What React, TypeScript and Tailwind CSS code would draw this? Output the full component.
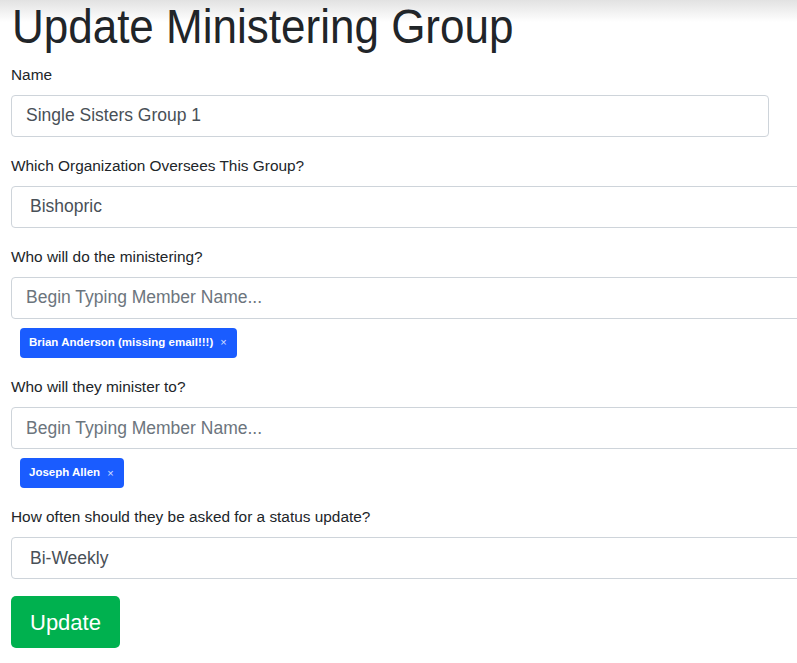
import React from "react";

const labelCls = "block text-[15.4px] leading-6 mb-2 text-[#212529]";
const inputCls =
  "block h-[42px] border border-[#ced4da] rounded-[4px] bg-white text-[17.5px] text-[#495057] placeholder:text-[#6c757d] px-[14px] outline-none";

function Badge({ text }: { text: string }) {
  return (
    <div className="mt-[9px] ml-[9px] inline-flex items-center h-[30px] rounded-[4px] bg-[#1a5cff] pl-[9px] pr-[10px] text-white">
      <span className="text-[11.5px] font-bold">{text}</span>
      <span className="ml-[7px] text-[11px] leading-none opacity-80">×</span>
    </div>
  );
}

export default function App() {
  return (
    <div
      className="min-h-[663px] w-[797px] overflow-hidden bg-[linear-gradient(to_bottom,#e2e2e2_0px,#ffffff_22px)] pl-[11px]"
      style={{ fontFamily: '"Liberation Sans", Arial, sans-serif' }}
    >
      <h1 className="text-[48px] leading-[1.2] text-[#212529] -mt-[2px] mb-[7px] pl-[1px] origin-left scale-x-[0.917]">
        Update Ministering Group
      </h1>

      <div className="mb-[17px]">
        <label className={labelCls}>Name</label>
        <input className={inputCls + " w-[758px]"} defaultValue="Single Sisters Group 1" />
      </div>

      <div className="mb-[17px]">
        <label className={labelCls}>Which Organization Oversees This Group?</label>
        <div className={inputCls + " w-[820px] flex items-center pl-[18px]"}>Bishopric</div>
      </div>

      <div className="mb-[17.5px]">
        <label className={labelCls}>Who will do the ministering?</label>
        <input className={inputCls + " w-[820px]"} placeholder="Begin Typing Member Name..." />
        <Badge text="Brian Anderson (missing email!!!)" />
      </div>

      <div className="mb-[17px]">
        <label className={labelCls}>Who will they minister to?</label>
        <input className={inputCls + " w-[820px]"} placeholder="Begin Typing Member Name..." />
        <Badge text="Joseph Allen" />
      </div>

      <div className="mb-[17px]">
        <label className={labelCls}>How often should they be asked for a status update?</label>
        <div className={inputCls + " w-[820px] flex items-center pl-[18px]"}>Bi-Weekly</div>
      </div>

      <button className="h-[52px] px-[19px] rounded-[5px] bg-[#00b14f] text-white text-[22px]">
        Update
      </button>
    </div>
  );
}
